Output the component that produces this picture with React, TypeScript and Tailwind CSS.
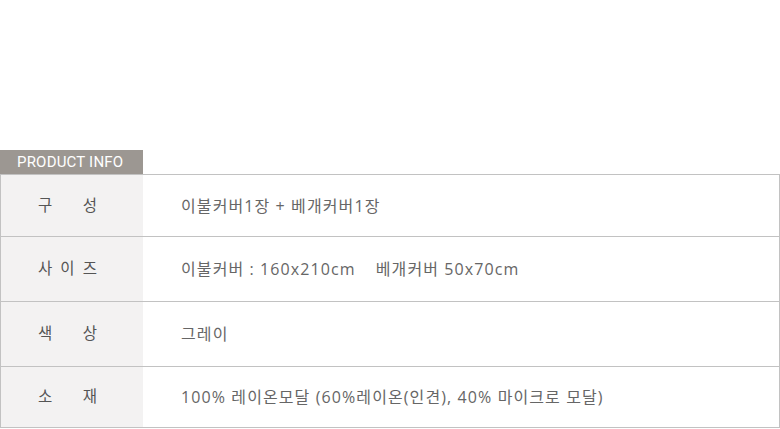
const rows = [
  { label: ["구", "성"], h: "h-[62px]", value: <>이불커버1장 + 베개커버1장</> },
  {
    label: ["사", "이", "즈"],
    h: "h-[65px]",
    value: (
      <>
        이불커버 : 160x210cm<span className="ml-[20px]">베개커버 50x70cm</span>
      </>
    ),
  },
  { label: ["색", "상"], h: "h-[65px]", value: <>그레이</> },
  {
    label: ["소", "재"],
    h: "h-[61px]",
    value: <>100% 레이온모달 (60%레이온(인견), 40% 마이크로 모달)</>,
  },
];

export default function App() {
  return (
    <div
      className="h-[429px] w-[780px] bg-white pt-[150px]"
      style={{ fontFamily: '"Open Sans", "Noto Sans CJK KR", sans-serif' }}
    >
      <div className="flex h-[24px] w-[143px] items-center bg-[#9c9792] pl-[17px] font-['Roboto'] text-[15px] tracking-[0.2px] text-white">
        PRODUCT INFO
      </div>
      <div className="border-x border-t border-[#c2c2c2]">
        {rows.map((r, i) => (
          <div key={i} className={`flex border-b border-[#c2c2c2] ${r.h}`}>
            <div className="flex w-[142px] shrink-0 items-center bg-[#f3f2f2]">
              <div className="ml-[37px] flex w-[59px] justify-between text-[15.5px] text-[#555]">
                {r.label.map((c) => (
                  <span key={c}>{c}</span>
                ))}
              </div>
            </div>
            <div className="flex items-center pl-[38px] text-[16px] tracking-[1.1px] text-[#666]">
              {r.value}
            </div>
          </div>
        ))}
      </div>
    </div>
  );
}
